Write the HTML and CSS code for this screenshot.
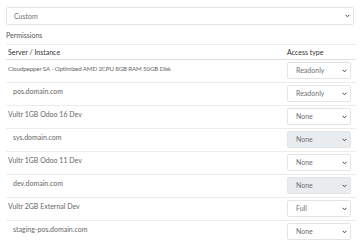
FILE: index.html
```html
<!DOCTYPE html>
<html>
<head>
<meta charset="utf-8">
<link rel="stylesheet" href="styles.css">
</head>
<body>
<div class="wrap">
  <div class="label">Access type</div>
  <div class="select select-lg">
    <span>Custom</span>
    <svg class="chev" width="5" height="4" viewBox="0 0 5 4"><path d="M0.6 0.8 L2.5 2.8 L4.4 0.8" fill="none" stroke="#444" stroke-width="1"/></svg>
  </div>
  <div class="label perm">Permissions</div>
  <table class="perms">
    <thead>
      <tr><th class="c-name">Server / Instance</th><th class="c-acc">Access type</th></tr>
    </thead>
    <tbody>
      <tr><td class="c-name long">Cloudpepper SA - Optimized AMD 2CPU 8GB RAM 50GB Disk</td><td class="c-acc"><div class="select"><span>Readonly</span><svg class="chev" width="5" height="4" viewBox="0 0 5 4"><path d="M0.6 0.8 L2.5 2.8 L4.4 0.8" fill="none" stroke="#444" stroke-width="1"/></svg></div></td></tr>
      <tr><td class="c-name sub">pos.domain.com</td><td class="c-acc"><div class="select"><span>Readonly</span><svg class="chev" width="5" height="4" viewBox="0 0 5 4"><path d="M0.6 0.8 L2.5 2.8 L4.4 0.8" fill="none" stroke="#444" stroke-width="1"/></svg></div></td></tr>
      <tr><td class="c-name">Vultr 1GB Odoo 16 Dev</td><td class="c-acc"><div class="select"><span>None</span><svg class="chev" width="5" height="4" viewBox="0 0 5 4"><path d="M0.6 0.8 L2.5 2.8 L4.4 0.8" fill="none" stroke="#444" stroke-width="1"/></svg></div></td></tr>
      <tr><td class="c-name sub">sys.domain.com</td><td class="c-acc"><div class="select disabled"><span>None</span><svg class="chev" width="5" height="4" viewBox="0 0 5 4"><path d="M0.6 0.8 L2.5 2.8 L4.4 0.8" fill="none" stroke="#444" stroke-width="1"/></svg></div></td></tr>
      <tr><td class="c-name">Vultr 1GB Odoo 11 Dev</td><td class="c-acc"><div class="select"><span>None</span><svg class="chev" width="5" height="4" viewBox="0 0 5 4"><path d="M0.6 0.8 L2.5 2.8 L4.4 0.8" fill="none" stroke="#444" stroke-width="1"/></svg></div></td></tr>
      <tr><td class="c-name sub">dev.domain.com</td><td class="c-acc"><div class="select disabled"><span>None</span><svg class="chev" width="5" height="4" viewBox="0 0 5 4"><path d="M0.6 0.8 L2.5 2.8 L4.4 0.8" fill="none" stroke="#444" stroke-width="1"/></svg></div></td></tr>
      <tr><td class="c-name">Vultr 2GB External Dev</td><td class="c-acc"><div class="select"><span>Full</span><svg class="chev" width="5" height="4" viewBox="0 0 5 4"><path d="M0.6 0.8 L2.5 2.8 L4.4 0.8" fill="none" stroke="#444" stroke-width="1"/></svg></div></td></tr>
      <tr><td class="c-name sub">staging-pos.domain.com</td><td class="c-acc"><div class="select"><span>None</span><svg class="chev" width="5" height="4" viewBox="0 0 5 4"><path d="M0.6 0.8 L2.5 2.8 L4.4 0.8" fill="none" stroke="#444" stroke-width="1"/></svg></div></td></tr>
    </tbody>
  </table>
</div>
</body>
</html>
```
FILE: styles.css
```css
html, body {
  margin: 0;
  padding: 0;
  background: #fff;
}
body {
  font-family: Lato, "Noto Sans", sans-serif;
  font-size: 7px;
  color: #666;
}
.wrap {
  margin-top: -9px;
  padding: 0 4px 0 6px;
}
.label {
  line-height: 11px;
  margin-bottom: 5px;
  color: #555;
}
.perm {
  margin-top: 5px;
  margin-bottom: 3px;
}
.select {
  box-sizing: border-box;
  height: 17px;
  border: 1px solid #e4e4e4;
  border-radius: 2px;
  background: #fff;
  display: flex;
  align-items: center;
  justify-content: space-between;
  padding: 0 3px 0 8px;
  color: #707070;
}
.select-lg {
  height: 18px;
  margin-right: 2px;
  padding-left: 7px;
}
.select.disabled {
  background: #e9ecef;
}
.chev {
  display: block;
}
.perms {
  width: 100%;
  border-collapse: collapse;
}
.perms th {
  font-weight: normal;
  color: #333;
  text-align: left;
  height: 13px;
  padding: 1px 2px 0 2px;
  line-height: 11px;
  border-top: 1px solid #ececec;
  border-bottom: 1px solid #e0e0e0;
}
.perms td {
  height: 17px;
  padding: 2px 2px 2px 2px;
  border-bottom: 1px solid #ececec;
  vertical-align: top;
  line-height: 11px;
}
.perms td.c-name {
  padding-top: 3px;
}
.perms td.long {
  font-size: 6.2px;
  letter-spacing: -0.15px;
}
.perms td.sub {
  padding-left: 7px;
}
.perms .c-acc {
  width: 64px;
  padding-left: 3px;
  padding-right: 5px;
}
.perms th.c-acc {
  padding-left: 3px;
}
```
